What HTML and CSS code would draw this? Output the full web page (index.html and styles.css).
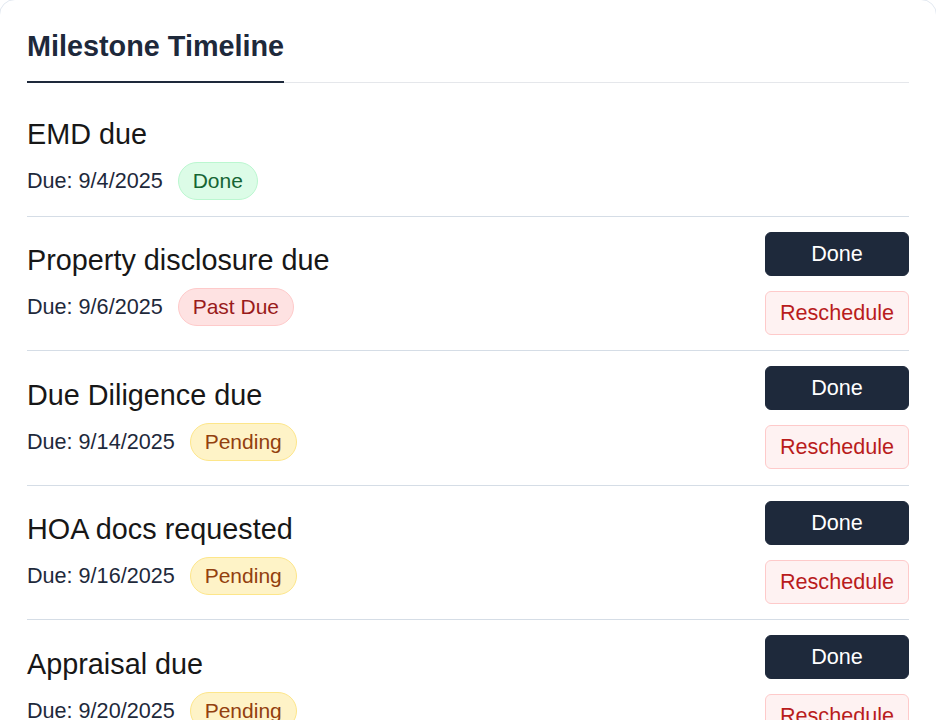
FILE: index.html
```html
<!DOCTYPE html>
<html lang="en">
<head>
    <meta charset="UTF-8">
    <meta name="viewport" content="width=device-width, initial-scale=1.0">
    <title>Milestone Timeline</title>
    <link rel="stylesheet" href="styles.css">
</head>
<body>
    <div class="card">
        <div class="tabs">
            <div class="tab active">Milestone Timeline</div>
        </div>

        <div class="milestone-list">
            <div class="milestone">
                <div class="milestone-info">
                    <div class="milestone-title">EMD due</div>
                    <div class="milestone-meta">
                        <span class="due-date">Due: 9/4/2025</span>
                        <span class="badge badge-done">Done</span>
                    </div>
                </div>
            </div>

            <div class="milestone">
                <div class="milestone-info">
                    <div class="milestone-title">Property disclosure due</div>
                    <div class="milestone-meta">
                        <span class="due-date">Due: 9/6/2025</span>
                        <span class="badge badge-past">Past Due</span>
                    </div>
                </div>
                <div class="milestone-actions">
                    <button class="btn btn-done">Done</button>
                    <button class="btn btn-reschedule">Reschedule</button>
                </div>
            </div>

            <div class="milestone">
                <div class="milestone-info">
                    <div class="milestone-title">Due Diligence due</div>
                    <div class="milestone-meta">
                        <span class="due-date">Due: 9/14/2025</span>
                        <span class="badge badge-pending">Pending</span>
                    </div>
                </div>
                <div class="milestone-actions">
                    <button class="btn btn-done">Done</button>
                    <button class="btn btn-reschedule">Reschedule</button>
                </div>
            </div>

            <div class="milestone">
                <div class="milestone-info">
                    <div class="milestone-title">HOA docs requested</div>
                    <div class="milestone-meta">
                        <span class="due-date">Due: 9/16/2025</span>
                        <span class="badge badge-pending">Pending</span>
                    </div>
                </div>
                <div class="milestone-actions">
                    <button class="btn btn-done">Done</button>
                    <button class="btn btn-reschedule">Reschedule</button>
                </div>
            </div>

            <div class="milestone">
                <div class="milestone-info">
                    <div class="milestone-title">Appraisal due</div>
                    <div class="milestone-meta">
                        <span class="due-date">Due: 9/20/2025</span>
                        <span class="badge badge-pending">Pending</span>
                    </div>
                </div>
                <div class="milestone-actions">
                    <button class="btn btn-done">Done</button>
                    <button class="btn btn-reschedule">Reschedule</button>
                </div>
            </div>
        </div>
    </div>
</body>
</html>
```

FILE: styles.css
```css
html, body {
    overflow: hidden; /* card runs past the window */
}

body {
    font-family: 'Liberation Sans', Arial, Helvetica, sans-serif;
    margin: 0;
    padding: 0;
    background: #ffffff;
    color: #171717;
}

.card {
    background: #ffffff;
    border: 1px solid #e2e8f0;
    border-radius: 16px;
    margin: -1px; /* card edges sit just outside the frame */
    padding: 30px 27px 26px;
}

/* Tabs */
.tabs {
    display: flex;
    border-bottom: 1px solid #e5e7eb;
}

.tab {
    font-size: 28.8px;
    line-height: 33px;
    font-weight: bold;
    color: #1e293b;
    padding-bottom: 18px;
    margin-bottom: -1px;
}

.tab.active {
    border-bottom: 2px solid #1e293b;
}

/* Milestones */
.milestone-list {
    padding-top: 16px;
}

.milestone {
    display: flex;
    justify-content: space-between;
    align-items: center;
    padding: 15px 0 15.5px;
    border-bottom: 1px solid #d5dde6;
}

.milestone-title {
    font-size: 28.8px;
    line-height: 40px;
    color: #171717;
    margin-bottom: 8px;
}

.milestone-meta {
    display: flex;
    align-items: center;
    gap: 15px;
}

.due-date {
    font-size: 21.6px;
    color: #1e293b;
}

.badge {
    font-size: 21px;
    line-height: 26px;
    padding: 5px 14px;
    border: 1px solid transparent;
    border-radius: 999px;
}

.badge-done {
    background: #dcfce7;
    border-color: #bbf7d0;
    color: #166534;
}

.badge-past {
    background: #fee2e2;
    border-color: #fecaca;
    color: #991b1b;
}

.badge-pending {
    background: #fef3c7;
    border-color: #fde68a;
    color: #92400e;
}

/* Buttons */
.milestone-actions {
    display: flex;
    flex-direction: column;
    gap: 15px;
}

.btn {
    font-family: inherit;
    font-size: 21.6px;
    line-height: 26px;
    width: 144px;
    padding: 8px 0;
    border: 1px solid transparent;
    border-radius: 6px;
    cursor: pointer;
}

.btn-done {
    background: #1e293b;
    border-color: #1e293b;
    color: #ffffff;
}

.btn-reschedule {
    background: #fef2f2;
    border-color: #fecaca;
    color: #b91c1c;
}
```
